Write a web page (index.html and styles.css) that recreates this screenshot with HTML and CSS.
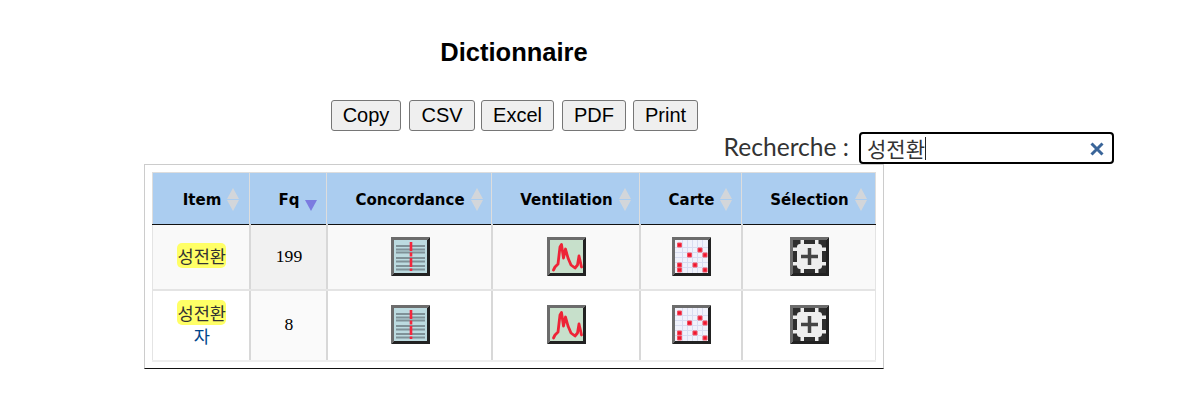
FILE: index.html
```html
<!DOCTYPE html>
<html lang="fr">
<head>
  <meta charset="UTF-8" />
  <meta name="viewport" content="width=device-width, initial-scale=1" />
  <title>Dictionnaire</title>
  <link rel="stylesheet" href="styles.css">
</head>
<body>
  <svg class="defs" width="0" height="0">
    <defs>
      <g id="bevel">
        <path fill="#6c6c6c" d="M0 0H39L36 3H3V36L0 39Z" />
        <path fill="#222" d="M39 0V39H0L3 36H36V3Z" />
      </g>
      <symbol id="icon-conc" viewBox="0 0 39 39">
        <rect x="3" y="3" width="33" height="33" fill="#bcdbe0" />
        <path stroke="#7f9298" stroke-width="1.800" d="M5 9H34M5 12.500H34M5 15.500H34M5 21H34M5 24.500H34M5 29H34M5 32.500H34" />
        <path stroke="#f5263c" stroke-width="2.600" stroke-dasharray="9 1.500 4 1.500" d="M20 5V34" />
        <use href="#bevel" />
      </symbol>
      <symbol id="icon-vent" viewBox="0 0 39 39">
        <rect x="3" y="3" width="33" height="33" fill="#c7e0cb" />
        <path fill="none" stroke="#ee2436" stroke-width="2.800" stroke-linejoin="round" stroke-linecap="round" d="M6.500 33L8 30L11 27L13 10L14.500 7.500L16.500 21L18.500 12L21 21L24 28L28 31L30.500 28L32 19L34.500 30" />
        <use href="#bevel" />
      </symbol>
      <symbol id="icon-map" viewBox="0 0 39 39">
        <rect x="3" y="3" width="33" height="33" fill="#f0f2fb" />
        <path stroke="#d8dcf0" d="M10.500 3V36M15.500 3V36M20.500 3V36M25.500 3V36M30.500 3V36M3 10.500H36M3 15.500H36M3 20.500H36M3 25.500H36M3 30.500H36" />
        <path fill="#f0152d" stroke="#f25566" d="M5.500 6H9.500V10H5.500ZM15.500 16H19.500V20H15.500ZM26 11H30V15H26ZM31 16H35V20H31ZM5.500 26H9.500V30H5.500ZM5.500 31H9.500V35H5.500ZM21 26H25V30H21ZM31 31H35V35H31Z" />
        <use href="#bevel" />
      </symbol>
      <symbol id="icon-sel" viewBox="0 0 39 39">
        <rect x="3" y="3" width="33" height="33" fill="#2e2e2e" />
        <rect x="7" y="7" width="25" height="25" rx="3" fill="#eee" />
        <path fill="#eee" d="M10.500 3H14V7H10.500ZM25 3H28.500V7H25ZM10.500 32H14V36H10.500ZM25 32H28.500V36H25ZM3 10.500H7V14H3ZM3 25H7V28.500H3ZM32 10.500H36V14H32ZM32 25H36V28.500H32Z" />
        <path stroke="#444" stroke-width="3.500" d="M19.500 11V28M11 19.500H28" />
        <use href="#bevel" />
      </symbol>
    </defs>
  </svg>

  <div class="page">
    <h1 class="title">Dictionnaire</h1>

    <div class="buttons">
      <button class="btn btn-copy" type="button">Copy</button>
      <button class="btn btn-csv" type="button">CSV</button>
      <button class="btn btn-excel" type="button">Excel</button>
      <button class="btn btn-pdf" type="button">PDF</button>
      <button class="btn btn-print" type="button">Print</button>
    </div>

    <div class="search">
      <label class="search-label" for="search">Recherche :</label>
      <div class="search-box">
        <input class="search-input" id="search" type="text" value="성전환" />
        <span class="search-caret"></span>
        <svg class="search-clear" width="14" height="14" viewBox="0 0 14 14">
          <path stroke="#3a6599" stroke-width="3" d="M1.500 1.500L12.500 12.500M12.500 1.500L1.500 12.500" />
        </svg>
      </div>
    </div>

    <div class="table-wrap">
      <table class="dict">
        <colgroup>
          <col class="col-item">
          <col class="col-fq">
          <col class="col-conc">
          <col class="col-vent">
          <col class="col-map">
          <col class="col-sel">
        </colgroup>
        <thead>
          <tr>
            <th><span class="th-in">Item <span class="sort"></span></span></th>
            <th><span class="th-in">Fq <span class="sort-desc"></span></span></th>
            <th><span class="th-in">Concordance <span class="sort"></span></span></th>
            <th><span class="th-in">Ventilation <span class="sort"></span></span></th>
            <th><span class="th-in">Carte <span class="sort"></span></span></th>
            <th><span class="th-in">Sélection <span class="sort"></span></span></th>
          </tr>
        </thead>
        <tbody>
          <tr class="odd">
            <td><a class="word"><mark class="hl">성전환</mark></a></td>
            <td class="fq">199</td>
            <td><svg class="icon"><use href="#icon-conc" /></svg></td>
            <td><svg class="icon"><use href="#icon-vent" /></svg></td>
            <td><svg class="icon"><use href="#icon-map" /></svg></td>
            <td><svg class="icon"><use href="#icon-sel" /></svg></td>
          </tr>
          <tr class="even">
            <td><a class="word"><mark class="hl">성전환</mark><br>자</a></td>
            <td class="fq">8</td>
            <td><svg class="icon"><use href="#icon-conc" /></svg></td>
            <td><svg class="icon"><use href="#icon-vent" /></svg></td>
            <td><svg class="icon"><use href="#icon-map" /></svg></td>
            <td><svg class="icon"><use href="#icon-sel" /></svg></td>
          </tr>
        </tbody>
      </table>
    </div>
  </div>
</body>
</html>
```

FILE: styles.css
```css
body {
  margin: 0;
  background: white;
  font-family: "Liberation Sans", Arial, sans-serif;
}
.defs {
  display: block;
  height: 0;
}
.page {
  width: 970px;
  margin-left: 144px;
  padding-top: 38px;
}
.title {
  width: 740px;
  margin: 0;
  font-size: 25.500px;
  line-height: 28px;
  text-align: center;
  color: black;
}
.buttons {
  display: flex;
  margin: 34px 0 0 187px;
}
.btn {
  height: 31px;
  padding: 0;
  font-family: "Liberation Sans", Arial, sans-serif;
  font-size: 20px;
  color: black;
  background: #efefef;
  border: 1px solid #767676;
  border-radius: 3px;
}
.btn-copy { width: 70px; margin-right: 8px; }
.btn-csv { width: 66px; margin-right: 6px; }
.btn-excel { width: 73px; margin-right: 8px; }
.btn-pdf { width: 64px; margin-right: 7px; }
.btn-print { width: 65px; }

.search {
  display: flex;
  justify-content: flex-end;
  align-items: center;
  margin-top: 1px;
  height: 32px;
}
.search-label {
  font-family: Lato, sans-serif;
  font-size: 24.600px;
  color: #333;
  margin: 0 10px 4px 0;
}
.search-box {
  position: relative;
  width: 255px;
  height: 32px;
}
.search-input {
  box-sizing: border-box;
  width: 100%;
  height: 100%;
  padding: 0 30px 0 6px;
  font-family: "Noto Sans CJK KR", sans-serif;
  font-size: 21px;
  color: #333;
  border: 2px solid black;
  border-radius: 4px;
  outline: none;
  background: white;
}
.search-caret {
  position: absolute;
  left: 66px;
  top: 5px;
  width: 1px;
  height: 23px;
  background: #222;
}
.search-clear {
  position: absolute;
  right: 10px;
  top: 10px;
}

.table-wrap {
  box-sizing: border-box;
  width: 740px;
  height: 205px;
  padding: 7px;
  border: 1px solid #ccc;
  border-bottom: 1px solid #111;
}
.dict {
  table-layout: fixed;
  width: 723px;
  border-collapse: collapse;
}
.col-item { width: 97px; }
.col-fq { width: 77px; }
.col-conc { width: 165px; }
.col-vent { width: 148px; }
.col-map { width: 102px; }
.col-sel { width: 134px; }

.dict th {
  height: 49px;
  padding: 2px 0 0 20px;
  font-family: "DejaVu Sans", Verdana, sans-serif;
  font-size: 15px;
  color: black;
  text-align: center;
  background: #abcdf0;
  border: 1px solid #ddd;
  border-bottom: 1px solid #111;
}
.th-in {
  display: inline-flex;
  align-items: center;
  gap: 6px;
}
.sort, .sort-desc {
  display: inline-block;
  width: 12px;
  height: 23px;
  position: relative;
}
.sort::before, .sort::after, .sort-desc::after {
  content: "";
  position: absolute;
  left: 0;
  border-left: 6px solid transparent;
  border-right: 6px solid transparent;
}
.sort::before {
  top: 0;
  border-bottom: 11px solid #d3d6da;
}
.sort::after {
  bottom: 0;
  border-top: 11px solid #d3d6da;
}
.sort-desc::after {
  bottom: 0;
  border-top: 11px solid #7b7be0;
}
.dict td {
  padding: 0 0 2px 2px;
  font-family: "Liberation Serif", serif;
  font-size: 17.600px;
  text-align: center;
  color: black;
  border-right: 2px solid #d8d8d8;
  border-bottom: 2px solid #e4e4e4;
}
.dict td:first-child { border-left: 1px solid #e4e4e4; }
.dict td:last-child { border-right: 1px solid #e4e4e4; }
.odd td {
  height: 62px;
  background: #f9f9f9;
}
.even td {
  height: 67px;
  background: white;
  border-bottom-color: #eee;
}
.odd .fq { background: #f1f1f1; }
.even .fq {
  background: #fafafa;
}

.word {
  font-family: "Noto Sans CJK KR", sans-serif;
  font-size: 17.600px;
  line-height: 21px;
  color: #00468c;
}
.hl {
  background: #ffff66;
  border-radius: 5px;
  color: #333;
}
.icon {
  display: block;
  width: 39px;
  height: 39px;
  margin: 0 auto;
  filter: blur(0.4px);
}
```
